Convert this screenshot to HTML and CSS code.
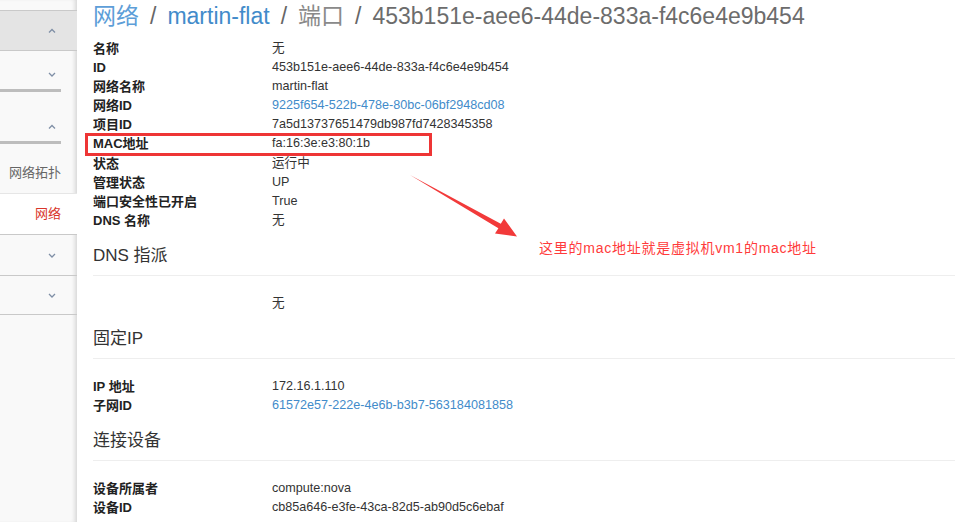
FILE: index.html
```html
<!DOCTYPE html>
<html lang="zh-CN">
<head>
    <meta charset="UTF-8">
    <title>端口详情</title>
    <link rel="stylesheet" href="styles.css">
</head>
<body>
    <div class="page">
        <aside class="sidebar">
            <div class="nav-item nav-head"><svg class="chev" width="8" height="5"><polyline points="1,4.5 4,1.5 7,4.5"/></svg></div>
            <div class="nav-item nav-sub first"><svg class="chev" width="8" height="5"><polyline points="1,1 4,4 7,1"/></svg></div>
            <div class="nav-item nav-sub second"><svg class="chev" width="8" height="5"><polyline points="1,4.5 4,1.5 7,4.5"/></svg></div>
            <div class="nav-item nav-link topo">网络拓扑</div>
            <div class="nav-item nav-link active">网络</div>
            <div class="nav-item nav-fold"><svg class="chev" width="8" height="5"><polyline points="1,1 4,4 7,1"/></svg></div>
            <div class="nav-item nav-fold last"><svg class="chev" width="8" height="5"><polyline points="1,1 4,4 7,1"/></svg></div>
        </aside>

        <main class="content">
            <h1 class="crumbs">
                <a class="crumb-cjk">网络</a><span class="sep">/</span><a>martin-flat</a><span class="sep">/</span><span class="crumb-muted">端口</span><span class="sep">/</span><span class="crumb-current">453b151e-aee6-44de-833a-f4c6e4e9b454</span>
            </h1>

            <dl class="details">
                <dt>名称</dt><dd>无</dd>
                <dt>ID</dt><dd>453b151e-aee6-44de-833a-f4c6e4e9b454</dd>
                <dt>网络名称</dt><dd>martin-flat</dd>
                <dt>网络ID</dt><dd><a>9225f654-522b-478e-80bc-06bf2948cd08</a></dd>
                <dt>项目ID</dt><dd>7a5d13737651479db987fd7428345358</dd>
                <dt class="marked">MAC地址</dt><dd>fa:16:3e:e3:80:1b</dd>
                <dt>状态</dt><dd>运行中</dd>
                <dt>管理状态</dt><dd>UP</dd>
                <dt>端口安全性已开启</dt><dd>True</dd>
                <dt>DNS 名称</dt><dd>无</dd>
            </dl>

            <h4 class="section">DNS 指派</h4>
            <dl class="details">
                <dt></dt><dd>无</dd>
            </dl>

            <h4 class="section">固定IP</h4>
            <dl class="details">
                <dt>IP 地址</dt><dd>172.16.1.110</dd>
                <dt>子网ID</dt><dd><a>61572e57-222e-4e6b-b3b7-563184081858</a></dd>
            </dl>

            <h4 class="section">连接设备</h4>
            <dl class="details">
                <dt>设备所属者</dt><dd>compute:nova</dd>
                <dt>设备ID</dt><dd>cb85a646-e3fe-43ca-82d5-ab90d5c6ebaf</dd>
            </dl>
        </main>

        <!-- 截图上的批注 -->
        <svg class="note-arrow" width="120" height="70" viewBox="405 170 120 70">
            <polygon points="410,175 500.8,223.8 504,218.5 517,236.5 495,233.5 498.4,228.2"/>
        </svg>
        <div class="note-text">这里的mac地址就是虚拟机vm1的mac地址</div>
    </div>
</body>
</html>
```

FILE: styles.css
```css
body {
    margin: 0;
    font-family: "Liberation Sans", "Noto Sans CJK SC", sans-serif;
    color: #333;
    background: #fff;
}
.page {
    position: relative;
    display: flex;
    min-height: 522px;
    overflow: hidden;
}

/* 左侧导航 */
.sidebar {
    width: 77px;
    flex-shrink: 0;
    padding-top: 10px;
    background: #f9f9f9;
    box-shadow: inset -4px 0 4px -2px rgba(0, 0, 0, 0.14);
}
.nav-item {
    box-sizing: border-box;
    display: flex;
    justify-content: flex-end;
    align-items: center;
    padding-right: 21px;
    position: relative;
}
.chev {
    display: block;
}
.chev polyline {
    fill: none;
    stroke: #7f8fa6;
    stroke-width: 1.3;
}
.nav-head {
    height: 41px;
    background: #e4e4e4;
    border-top: 1px solid #c9c9c9;
    border-bottom: 1px solid #c9c9c9;
}
.nav-sub {
    align-items: flex-start;
}
.nav-sub::after {
    content: "";
    position: absolute;
    left: 0;
    bottom: 0;
    width: 61px;
    height: 3px;
    background: #bdbdbd;
}
.nav-sub.first {
    height: 41px;
    padding-top: 21px;
}
.nav-sub.second {
    height: 52px;
    padding-top: 32px;
}
.nav-link {
    padding-right: 16px;
    font-size: 13px;
    line-height: 20px;
}
.topo {
    height: 50px;
    align-items: flex-start;
    padding-top: 19px;
    color: #666;
    border-bottom: 1px solid #e6e6e6;
}
.active {
    height: 41px;
    color: #d9352a;
    background: #fff;
    border-bottom: 1px solid #c9c9c9;
}
.nav-fold {
    height: 41px;
    border-bottom: 1px solid #c9c9c9;
}
.nav-fold.last {
    height: 39px;
}

/* 主体内容 */
.content {
    flex: 1;
    padding-left: 16px;
}
.crumbs {
    margin: 0 0 8px;
    padding-top: 1px;
    font-size: 23px;
    font-weight: normal;
    line-height: 30px;
    color: #6c6c6c;
    white-space: nowrap;
}
.crumbs a {
    color: #428bca;
}
.crumb-cjk {
    color: #5d9ed8 !important;
}
.sep {
    color: #666;
    padding: 0 11px;
}
.crumb-muted {
    color: #8a8a8a;
}
.details {
    display: grid;
    grid-template-columns: 179px 1fr;
    margin: 0;
    font-size: 13px;
    line-height: 19.1px;
}
.details dt {
    font-weight: bold;
    color: #222;
    position: relative;
}
.details dd {
    margin: 0;
    font-size: 12.6px;
    white-space: nowrap;
}
.details a {
    color: #428bca;
}
.marked::after {
    content: "";
    position: absolute;
    left: -8px;
    top: -1.5px;
    width: 347px;
    height: 23px;
    box-sizing: border-box;
    border: 3px solid #ee3535;
}
.section {
    margin: 16px 0 18px;
    padding-bottom: 9px;
    font-size: 17px;
    font-weight: normal;
    line-height: 20px;
    color: #333;
    border-bottom: 1px solid #eee;
}

/* 批注 */
.note-arrow {
    position: absolute;
    left: 405px;
    top: 170px;
}
.note-arrow polygon {
    fill: #f23a3a;
}
.note-text {
    position: absolute;
    left: 539px;
    top: 238px;
    font-size: 14px;
    line-height: 20px;
    letter-spacing: 0.75px;
    color: #ff3b3b;
    white-space: nowrap;
}
```
